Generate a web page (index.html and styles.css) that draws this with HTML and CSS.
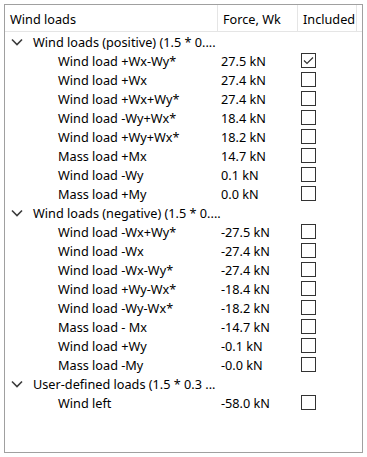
FILE: index.html
```html
<!DOCTYPE html>
<html>
<head>
<meta charset="utf-8">
<link rel="stylesheet" href="styles.css">
</head>
<body>
<div class="panel">
  <div class="header">
    <div class="hcell">Wind loads</div>
    <div class="hcell">Force, Wk</div>
    <div class="hcell">Included</div>
  </div>
  <div class="body">
    <div class="row group"><div class="label"><svg class="chev" width="12" height="8" viewBox="0 0 12 8"><polyline points="1,1.5 6,6.5 11,1.5"/></svg><span>Wind loads (positive) (1.5 * 0....</span></div></div>
    <div class="row"><div class="name">Wind load +Wx-Wy*</div><div class="force">27.5 kN</div><div class="inc"><span class="cb"><svg width="13" height="13" viewBox="0 0 13 13"><polyline points="2,6.5 5,9.5 11,3.5"/></svg></span></div></div>
    <div class="row"><div class="name">Wind load +Wx</div><div class="force">27.4 kN</div><div class="inc"><span class="cb"></span></div></div>
    <div class="row"><div class="name">Wind load +Wx+Wy*</div><div class="force">27.4 kN</div><div class="inc"><span class="cb"></span></div></div>
    <div class="row"><div class="name">Wind load -Wy+Wx*</div><div class="force">18.4 kN</div><div class="inc"><span class="cb"></span></div></div>
    <div class="row"><div class="name">Wind load +Wy+Wx*</div><div class="force">18.2 kN</div><div class="inc"><span class="cb"></span></div></div>
    <div class="row"><div class="name">Mass load +Mx</div><div class="force">14.7 kN</div><div class="inc"><span class="cb"></span></div></div>
    <div class="row"><div class="name">Wind load -Wy</div><div class="force">0.1 kN</div><div class="inc"><span class="cb"></span></div></div>
    <div class="row"><div class="name">Mass load +My</div><div class="force">0.0 kN</div><div class="inc"><span class="cb"></span></div></div>
    <div class="row group"><div class="label"><svg class="chev" width="12" height="8" viewBox="0 0 12 8"><polyline points="1,1.5 6,6.5 11,1.5"/></svg><span>Wind loads (negative) (1.5 * 0....</span></div></div>
    <div class="row"><div class="name">Wind load -Wx+Wy*</div><div class="force">-27.5 kN</div><div class="inc"><span class="cb"></span></div></div>
    <div class="row"><div class="name">Wind load -Wx</div><div class="force">-27.4 kN</div><div class="inc"><span class="cb"></span></div></div>
    <div class="row"><div class="name">Wind load -Wx-Wy*</div><div class="force">-27.4 kN</div><div class="inc"><span class="cb"></span></div></div>
    <div class="row"><div class="name">Wind load +Wy-Wx*</div><div class="force">-18.4 kN</div><div class="inc"><span class="cb"></span></div></div>
    <div class="row"><div class="name">Wind load -Wy-Wx*</div><div class="force">-18.2 kN</div><div class="inc"><span class="cb"></span></div></div>
    <div class="row"><div class="name">Mass load - Mx</div><div class="force">-14.7 kN</div><div class="inc"><span class="cb"></span></div></div>
    <div class="row"><div class="name">Wind load +Wy</div><div class="force">-0.1 kN</div><div class="inc"><span class="cb"></span></div></div>
    <div class="row"><div class="name">Mass load -My</div><div class="force">-0.0 kN</div><div class="inc"><span class="cb"></span></div></div>
    <div class="row group"><div class="label"><svg class="chev" width="12" height="8" viewBox="0 0 12 8"><polyline points="1,1.5 6,6.5 11,1.5"/></svg><span>User-defined loads (1.5 * 0.3 ...</span></div></div>
    <div class="row"><div class="name">Wind left</div><div class="force">-58.0 kN</div><div class="inc"><span class="cb"></span></div></div>
  </div>
</div>
</body>
</html>
```
FILE: styles.css
```css
html, body {
  margin: 0;
  padding: 0;
  background: #ffffff;
}
body {
  padding: 4px;
  font-family: "Noto Sans", "Open Sans", sans-serif;
  font-size: 12.7px;
  color: #000000;
}
.panel {
  box-sizing: border-box;
  width: 359px;
  height: 449px;
  border: 1px solid #a0a0a0;
  background: #ffffff;
}
.header {
  display: grid;
  grid-template-columns: 213px 80px 59px;
  height: 27px;
  border-bottom: 1px solid #e5e5e5;
  box-sizing: border-box;
}
.hcell {
  border-right: 1px solid #e5e5e5;
  padding-left: 5px;
  padding-top: 3px;
  line-height: 23px;
  white-space: nowrap;
}
.body {
  padding-top: 0;
}
.row {
  display: grid;
  grid-template-columns: 213px 80px 59px;
  height: 19px;
  line-height: 18px;
  align-items: center;
  white-space: nowrap;
}
.label {
  grid-column: 1 / 4;
  display: flex;
  align-items: center;
  padding-left: 6px;
}
.chev {
  flex: none;
  margin-right: 10px;
}
.chev polyline {
  fill: none;
  stroke: #3c3c3c;
  stroke-width: 1.6;
}
.name {
  padding-left: 53px;
}
.force {
  padding-left: 3px;
}
.inc {
  padding-left: 3px;
  display: flex;
  align-items: center;
}
.cb {
  box-sizing: border-box;
  width: 15px;
  height: 15px;
  border: 1px solid #333333;
  display: flex;
  align-items: center;
  justify-content: center;
}
.cb svg polyline {
  fill: none;
  stroke: #333333;
  stroke-width: 1.2;
}
```
